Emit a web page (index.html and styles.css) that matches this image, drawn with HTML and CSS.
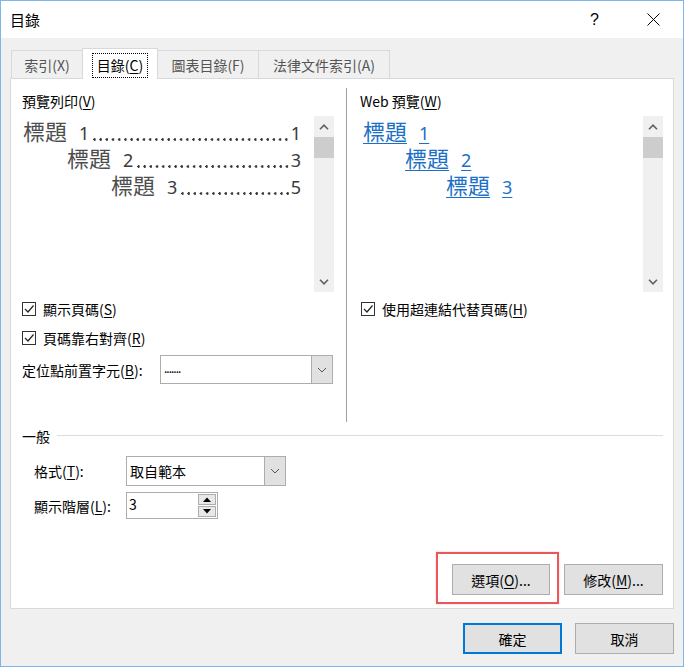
FILE: index.html
```html
<!DOCTYPE html>
<html lang="zh-Hant">
<head>
<meta charset="utf-8">
<title>目錄</title>
<link rel="stylesheet" href="styles.css">
</head>
<body>
<div class="window">
  <div class="titlebar">
    <div class="title">目錄</div>
    <div class="help">?</div>
    <div class="close"><svg width="13" height="13" viewBox="0 0 13 13"><path d="M0.5 0.5 L12.5 12.5 M12.5 0.5 L0.5 12.5" stroke="#000" stroke-width="1" fill="none"/></svg></div>
  </div>

  <div class="tabs">
    <div class="tab t1">索引(X)</div>
    <div class="tab t2 active"><span class="focus">目錄(<u>C</u>)</span></div>
    <div class="tab t3">圖表目錄(F)</div>
    <div class="tab t4">法律文件索引(A)</div>
  </div>

  <div class="panel">
    <div class="upper">
      <div class="col left">
        <div class="label">預覽列印(<u>V</u>)</div>
        <div class="preview">
          <div class="preview-body print">
            <div class="toc-row lvl1"><span class="h">標題</span><span class="n">1</span><span class="dots"></span><span class="p">1</span></div>
            <div class="toc-row lvl2"><span class="h">標題</span><span class="n">2</span><span class="dots"></span><span class="p">3</span></div>
            <div class="toc-row lvl3"><span class="h">標題</span><span class="n">3</span><span class="dots"></span><span class="p">5</span></div>
          </div>
          <div class="sb">
            <div class="sb-btn"><svg width="10" height="6" viewBox="0 0 10 6"><path d="M1 5.2 L5 1.2 L9 5.2" stroke="#606060" stroke-width="1.6" fill="none"/></svg></div>
            <div class="thumb"></div>
            <div class="track"></div>
            <div class="sb-btn"><svg width="10" height="6" viewBox="0 0 10 6"><path d="M1 0.8 L5 4.8 L9 0.8" stroke="#606060" stroke-width="1.6" fill="none"/></svg></div>
          </div>
        </div>
        <div class="check row1"><span class="cb"><svg width="12" height="12" viewBox="0 0 12 12"><path d="M2 6 L5 9 L10.5 2.5" stroke="#222" stroke-width="1.2" fill="none"/></svg></span><span>顯示頁碼(<u>S</u>)</span></div>
        <div class="check row2"><span class="cb"><svg width="12" height="12" viewBox="0 0 12 12"><path d="M2 6 L5 9 L10.5 2.5" stroke="#222" stroke-width="1.2" fill="none"/></svg></span><span>頁碼靠右對齊(<u>R</u>)</span></div>
        <div class="leader-row">
          <span class="leader-label">定位點前置字元(<u>B</u>):</span>
          <div class="combo leader-combo">
            <div class="combo-text small">.......</div>
            <div class="combo-arrow"><svg width="10" height="6" viewBox="0 0 10 6"><path d="M1 1 L5 5 L9 1" stroke="#555" stroke-width="1" fill="none"/></svg></div>
          </div>
        </div>
      </div>
      <div class="divider"></div>
      <div class="col right">
        <div class="label">Web 預覽(<u>W</u>)</div>
        <div class="preview">
          <div class="preview-body web">
            <div class="web-row lvl1"><a class="link"><span class="h">標題</span><span class="n">1</span></a></div>
            <div class="web-row lvl2"><a class="link"><span class="h">標題</span><span class="n">2</span></a></div>
            <div class="web-row lvl3"><a class="link"><span class="h">標題</span><span class="n">3</span></a></div>
          </div>
          <div class="sb">
            <div class="sb-btn"><svg width="10" height="6" viewBox="0 0 10 6"><path d="M1 5.2 L5 1.2 L9 5.2" stroke="#606060" stroke-width="1.6" fill="none"/></svg></div>
            <div class="thumb"></div>
            <div class="track"></div>
            <div class="sb-btn"><svg width="10" height="6" viewBox="0 0 10 6"><path d="M1 0.8 L5 4.8 L9 0.8" stroke="#606060" stroke-width="1.6" fill="none"/></svg></div>
          </div>
        </div>
        <div class="check row1"><span class="cb"><svg width="12" height="12" viewBox="0 0 12 12"><path d="M2 6 L5 9 L10.5 2.5" stroke="#222" stroke-width="1.2" fill="none"/></svg></span><span>使用超連結代替頁碼(<u>H</u>)</span></div>
      </div>
    </div>

    <div class="general">
      <span>一般</span>
      <div class="rule"></div>
    </div>

    <div class="field format-row">
      <span class="field-label">格式(<u>T</u>):</span>
      <div class="combo format-combo">
        <div class="combo-text">取自範本</div>
        <div class="combo-arrow"><svg width="10" height="6" viewBox="0 0 10 6"><path d="M1 1 L5 5 L9 1" stroke="#555" stroke-width="1" fill="none"/></svg></div>
      </div>
    </div>
    <div class="field level-row">
      <span class="field-label">顯示階層(<u>L</u>):</span>
      <div class="spin">
        <div class="spin-text">3</div>
        <div class="spin-btns">
          <div class="spin-btn"><svg width="8" height="5" viewBox="0 0 8 5"><path d="M0 5 L4 0.5 L8 5 Z" fill="#000"/></svg></div>
          <div class="spin-btn"><svg width="8" height="5" viewBox="0 0 8 5"><path d="M0 0 L4 4.5 L8 0 Z" fill="#000"/></svg></div>
        </div>
      </div>
    </div>

    <div class="panel-buttons">
      <button class="btn">選項(<u>O</u>)...</button>
      <button class="btn">修改(<u>M</u>)...</button>
    </div>
  </div>

  <div class="footer">
    <button class="btn default">確定</button>
    <button class="btn">取消</button>
  </div>

  <div class="highlight"></div>
</div>
</body>
</html>
```

FILE: styles.css
```css
html, body {
  margin: 0;
  padding: 0;
  background: #f0f0f0;
}
body {
  font-family: "Noto Sans CJK TC", "Noto Sans", sans-serif;
  font-size: 14px;
  color: #000;
}
u {
  text-decoration: underline;
  text-underline-offset: 2px;
}

.window {
  position: relative;
  width: 684px;
  height: 667px;
  box-sizing: border-box;
  border: 1px solid #7fb5ea;
  background: #f0f0f0;
  display: flex;
  flex-direction: column;
}

/* title bar */
.titlebar {
  height: 37px;
  background: #fff;
  display: flex;
  align-items: center;
  padding-left: 9px;
}
.title {
  flex: 1;
  font-size: 15px;
  line-height: 20px;
}
.help {
  font-size: 16px;
  line-height: 20px;
  font-family: "Liberation Sans", sans-serif;
  margin-right: 48px;
}
.close {
  width: 13px;
  height: 13px;
  margin-right: 23px;
  display: flex;
}

/* tabs */
.tabs {
  display: flex;
  align-items: flex-end;
  height: 30px;
  margin-top: 10px;
  padding-left: 10px;
  position: relative;
  z-index: 1;
}
.tab {
  box-sizing: border-box;
  height: 28px;
  border: 1px solid #d9d9d9;
  border-bottom: none;
  border-right: none;
  background: #f0f0f0;
  color: #555;
  display: flex;
  align-items: center;
  justify-content: center;
  line-height: 20px;
}
.t1 { width: 71px; }
.t2 { width: 76px; }
.t3 { width: 100px; }
.t4 { width: 132px; border-right: 1px solid #d9d9d9; }
.tab.active {
  height: 31px;
  margin-bottom: -1px;
  background: #fff;
  color: #000;
  border-right: 1px solid #d9d9d9;
  padding-top: 1px;
  align-items: flex-start;
}
.tab.active + .tab { border-left: none; }
.focus {
  margin-top: 3px;
  padding: 1px 4px 2px;
  border: 1px dotted #000;
  line-height: 20px;
}

/* panel */
.panel {
  box-sizing: border-box;
  width: 664px;
  height: 531px;
  margin-left: 9px;
  border: 1px solid #d9d9d9;
  background: #fff;
  padding: 0 10px 0 11px;
  display: flex;
  flex-direction: column;
}
.upper {
  display: flex;
  margin-top: 9px;
  height: 334px;
}
.col.left { width: 312px; }
.col.right { flex: 1; }
.divider {
  width: 1px;
  background: #a0a0a0;
  margin: 0 13px 0 12px;
}
.label {
  margin-top: 3px;
  line-height: 20px;
  height: 20px;
}
.preview {
  margin-top: 5px;
  height: 176px;
  display: flex;
}
.preview-body {
  flex: 1;
  padding-top: 2px;
  min-width: 0;
}

/* print preview rows */
.toc-row {
  display: flex;
  align-items: baseline;
  height: 27px;
  line-height: 25px;
  color: #4d4d4d;
  padding-right: 13px;
  white-space: nowrap;
}
.toc-row .h, .web-row .h {
  font-size: 22px;
}
.toc-row .n, .web-row .n, .toc-row .p {
  font-family: "Noto Sans", sans-serif;
  font-size: 18px;
  line-height: 22px;
}
.toc-row .n { margin-left: 12px; color: #3a3a3a; }
.web-row .n { margin-left: 12px; }
.toc-row .dots {
  flex: 1;
  align-self: flex-end;
  height: 3px;
  margin: 0 2px 4px 4px;
  background-image: radial-gradient(circle at 1.5px 1.5px, #3a3a3a 1.1px, transparent 1.5px);
  background-size: 6.2px 3px;
  background-repeat: repeat-x;
}
.toc-row .p { color: #3a3a3a; }
.print .lvl1 { padding-left: 1px; }
.print .lvl2 { padding-left: 45px; }
.print .lvl3 { padding-left: 89px; }

/* web preview rows */
.web-row {
  height: 27px;
  line-height: 25px;
  white-space: nowrap;
}
.link {
  color: #1b6fc6;
  text-decoration: underline;
  text-decoration-thickness: 1px;
  text-underline-offset: 3px;
}
.web .lvl1 { padding-left: 3px; }
.web .lvl2 { padding-left: 45px; }
.web .lvl3 { padding-left: 86px; }

/* scrollbars */
.sb {
  width: 20px;
  background: #f0f0f0;
  display: flex;
  flex-direction: column;
}
.sb-btn {
  height: 21px;
  display: flex;
  align-items: center;
  justify-content: center;
}
.thumb {
  height: 21px;
  background: #cdcdcd;
}
.track { flex: 1; }

/* checkboxes */
.check {
  display: flex;
  align-items: center;
  height: 20px;
  line-height: 20px;
}
.check.row1 { margin-top: 7px; }
.check.row2 { margin-top: 9px; }
.right .check { padding-left: 1px; }
.cb {
  box-sizing: border-box;
  width: 14px;
  height: 14px;
  border: 1px solid #333;
  background: #fff;
  margin-right: 7px;
  display: flex;
  align-items: center;
  justify-content: center;
}

/* combos */
.leader-row {
  display: flex;
  align-items: center;
  margin-top: 7px;
  height: 29px;
}
.leader-label { width: 138px; }
.combo {
  box-sizing: border-box;
  display: flex;
  border: 1px solid #adadad;
  background: #fff;
}
.leader-combo {
  width: 173px;
  height: 29px;
}
.combo-text {
  flex: 1;
  padding-left: 3px;
  line-height: 27px;
}
.combo-text.small {
  font-size: 12px;
  letter-spacing: -1px;
  line-height: 24px;
}
.combo-arrow {
  width: 20px;
  background: #e1e1e1;
  border-left: 1px solid #adadad;
  display: flex;
  align-items: center;
  justify-content: center;
}

/* general section */
.general {
  display: flex;
  align-items: center;
  margin-top: 4px;
  height: 20px;
  line-height: 20px;
}
.rule {
  flex: 1;
  height: 1px;
  background: #dcdcdc;
  margin-left: 7px;
  margin-top: -1px;
}
.field {
  display: flex;
  align-items: center;
  padding-left: 12px;
}
.field-label {
  width: 92px;
  line-height: 20px;
}
.format-row {
  margin-top: 10px;
  height: 30px;
}
.format-combo {
  width: 160px;
  height: 30px;
}
.format-combo .combo-text { line-height: 28px; }
.level-row {
  margin-top: 6px;
  height: 27px;
}
.spin {
  box-sizing: border-box;
  width: 92px;
  height: 27px;
  border: 1px solid #adadad;
  background: #fff;
  display: flex;
}
.spin-text {
  flex: 1;
  padding-left: 2px;
  line-height: 22px;
}
.spin-btns {
  display: flex;
  flex-direction: column;
  padding: 1px 1px 1px 0;
}
.spin-btn {
  box-sizing: border-box;
  width: 18px;
  height: 12px;
  border: 1px solid #adadad;
  background: #e8e8e8;
  display: flex;
  align-items: center;
  justify-content: center;
}
.spin-btn + .spin-btn { margin-top: 1px; }

/* buttons */
.btn {
  box-sizing: border-box;
  height: 31px;
  border: 1px solid #adadad;
  background: #e1e1e1;
  font-family: "Noto Sans CJK TC", "Noto Sans", sans-serif;
  font-size: 14px;
  color: #000;
  padding: 0;
  line-height: 20px;
}
.panel-buttons {
  display: flex;
  justify-content: flex-end;
  gap: 14px;
  margin-top: 45px;
}
.panel-buttons .btn:first-child { width: 98px; }
.panel-buttons .btn:last-child { width: 99px; }
.footer {
  display: flex;
  justify-content: flex-end;
  gap: 13px;
  margin-top: 14px;
  padding-right: 9px;
}
.footer .btn { width: 99px; }
.btn.default { border: 2px solid #0078d7; }

/* annotation */
.highlight {
  position: absolute;
  left: 435px;
  top: 551px;
  width: 123px;
  height: 52px;
  box-sizing: border-box;
  border: 2px solid #e8585b;
  box-shadow: 0 0 2px rgba(232, 88, 91, 0.35);
  pointer-events: none;
}
```
